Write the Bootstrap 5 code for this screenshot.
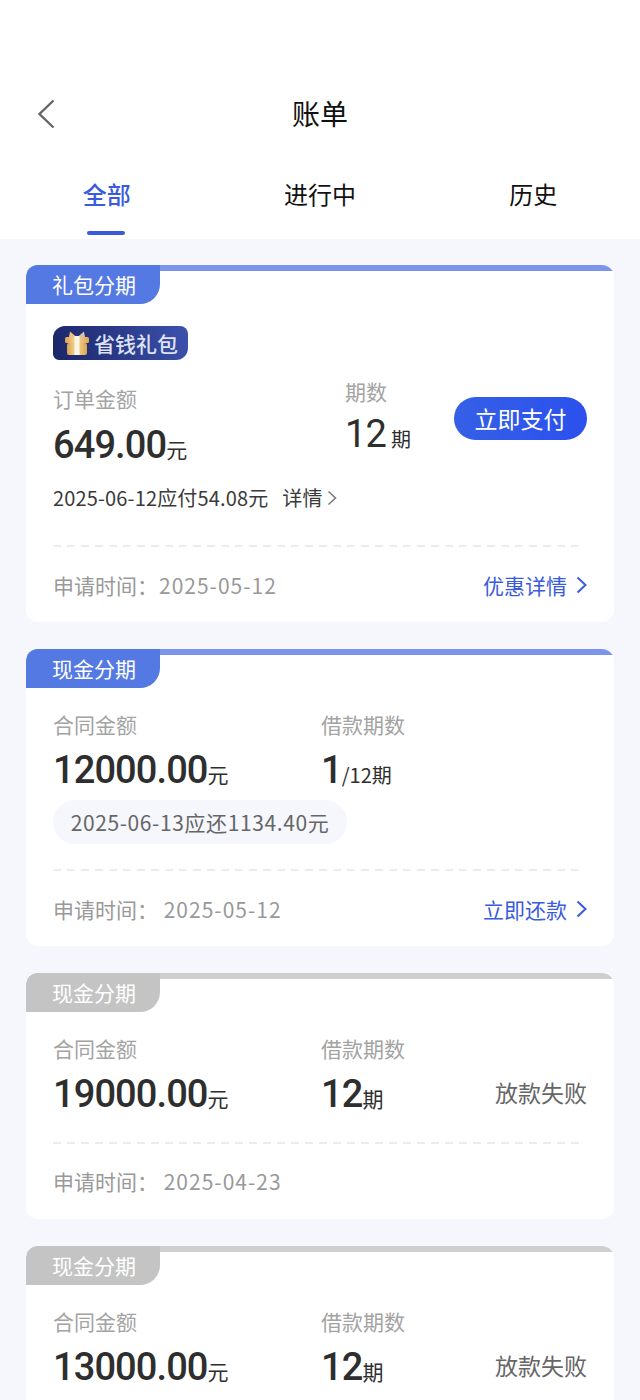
<!DOCTYPE html>
<html lang="zh-CN">
<head>
  <meta charset="UTF-8" />
  <meta name="viewport" content="width=device-width, initial-scale=1" />
  <title>账单</title>
  <link rel="stylesheet" href="https://cdn.jsdelivr.net/npm/bootstrap@5.3.0/dist/css/bootstrap.min.css" />
  <style>
    html, body {
      height: 1400px;
      overflow: hidden;
    }
    body {
      background: #f5f7fc;
      font-family: "Noto Sans CJK SC", "Noto Sans", sans-serif;
      color: #333;
    }
    .top-area {
      background: #fff;
      height: 239px;
      padding-top: 89px;
    }
    .title-bar {
      height: 48px;
      position: relative;
      font-size: 28px;
      line-height: 48px;
      color: #111;
      text-align: center;
    }
    .back-btn {
      position: absolute;
      left: 37px;
      top: 10px;
    }
    .tab-bar {
      height: 61px;
      margin-top: 33px;
    }
    .tab-item {
      flex: 1 1 0;
      text-align: center;
      font-size: 24px;
      line-height: 48px;
      color: #111;
      position: relative;
    }
    .tab-item.on {
      color: #3a5bdb;
      font-weight: 500;
    }
    .tab-item.on::after {
      content: "";
      position: absolute;
      left: 50%;
      bottom: -4px;
      width: 38px;
      height: 4px;
      margin-left: -20px;
      border-radius: 2px;
      background: #3a5bdb;
    }
    .bill-list {
      padding: 26px 26px 0;
      gap: 27px;
    }
    .bill-card {
      border: 0;
      border-radius: 12px;
      overflow: hidden;
      background: #fff;
      flex-shrink: 0;
    }
    .top-line {
      height: 6px;
      background: #7d94ec;
      border-radius: 6px 6px 0 0;
    }
    .bill-tag {
      width: 134px;
      height: 39px;
      margin-top: -6px;
      background: #5479e2;
      border-radius: 10px 0 20px 0;
      color: #fff;
      font-size: 21px;
      line-height: 38px;
      padding-left: 2px;
      text-align: center;
    }
    .is-off .top-line { background: #cfcfcf; }
    .is-off .bill-tag { background: #c4c4c4; }
    .bill-body {
      padding: 0 27px;
    }
    .gift-badge {
      width: 135px;
      height: 34px;
      margin-top: 22px;
      border-radius: 12px 8px 12px 6px;
      background: linear-gradient(75deg, #1b2568, #3c52ad);
      color: #dfe3f5;
      font-size: 21px;
      font-weight: 500;
      line-height: 34px;
      padding-left: 11px;
      gap: 4px;
    }
    .info-label {
      font-size: 21px;
      line-height: 30px;
      color: #a3a3a3;
      margin-bottom: 9px;
    }
    .left-col.wide .info-label {
      margin-bottom: 10px;
    }
    .period-col .info-label {
      margin-bottom: 6px;
    }
    .big-num {
      font-family: "Roboto", sans-serif;
      font-size: 38px;
      font-weight: 500;
      line-height: 44px;
      letter-spacing: -0.9px;
      color: #2e2e2e;
    }
    .period-col .big-num {
      font-weight: 400;
    }
    .unit-text {
      font-family: "Noto Sans CJK SC", sans-serif;
      font-size: 21px;
      font-weight: 400;
      letter-spacing: 0;
    }
    .unit-text.small-unit {
      font-size: 20px;
      margin-left: 5px;
    }
    .unit-text.slash-unit {
      font-size: 20px;
    }
    .left-col { width: 268px; }
    .left-col.wide { width: 292px; padding-top: 7px; }
    .pay-btn {
      width: 133px;
      height: 43px;
      margin-left: auto;
      margin-top: 21px;
      border: 0;
      border-radius: 22px;
      background: linear-gradient(90deg, #3560e6, #2b50ee);
      color: #fff;
      font-size: 23px;
      line-height: 41px;
      padding: 0;
    }
    .due-line {
      font-size: 20px;
      line-height: 28px;
      letter-spacing: 0.15px;
      color: #3a3a3a;
      margin-top: 13px;
      gap: 14px;
    }
    .due-pill {
      width: 294px;
      height: 44px;
      border-radius: 22px;
      background: #f5f7fc;
      color: #666;
      font-size: 21px;
      letter-spacing: 0.6px;
      line-height: 44px;
      text-align: center;
      margin-top: 3px;
    }
    .dash-line {
      height: 2px;
      margin-right: 7px;
      background: repeating-linear-gradient(90deg, #ececec 0 8px, transparent 8px 14px);
    }
    .foot-row {
      font-size: 21px;
      line-height: 30px;
      color: #999;
    }
    .date-num {
      letter-spacing: 1px;
      margin-left: 1px;
    }
    .foot-link {
      color: #3a5bdb;
      gap: 9px;
    }
    .status-text {
      margin-left: auto;
      margin-top: 37px;
      font-size: 23px;
      line-height: 44px;
      color: #666;
    }
    .last-body {
      padding-bottom: 48px;
    }
  </style>
</head>
<body>

<div class="top-area">
  <div class="title-bar">
    <svg class="back-btn" width="18" height="30" viewBox="0 0 18 30" fill="none">
      <path d="M16.5 1.5 L2.5 15 L16.5 28.5" stroke="#666" stroke-width="2.4" />
    </svg>
    账单
  </div>
  <div class="tab-bar d-flex">
    <div class="tab-item on">全部</div>
    <div class="tab-item">进行中</div>
    <div class="tab-item">历史</div>
  </div>
</div>

<div class="bill-list d-flex flex-column">

  <div class="card bill-card">
    <div class="top-line"></div>
    <div class="bill-tag">礼包分期</div>
    <div class="bill-body">
      <div class="gift-badge d-flex align-items-center">
        <svg width="26" height="26" viewBox="0 0 26 26">
          <defs>
            <linearGradient id="giftGold" x1="0" y1="0" x2="1" y2="0">
              <stop offset="0" stop-color="#d9a04e" />
              <stop offset="0.45" stop-color="#f6d99c" />
              <stop offset="1" stop-color="#dca653" />
            </linearGradient>
          </defs>
          <path d="M6 1.5 L12.5 7 L9 8 L5 7 Z" fill="#eec27a" />
          <path d="M20 1.5 L13.5 7 L17 8 L21 7 Z" fill="#cfc6b4" />
          <rect x="1" y="7" width="24" height="6" rx="1.5" fill="url(#giftGold)" />
          <rect x="3" y="13" width="20" height="12" rx="2" fill="url(#giftGold)" />
          <rect x="10.5" y="6" width="5" height="19" fill="#fdf5e4" />
        </svg>
        <span>省钱礼包</span>
      </div>
      <div class="d-flex" style="margin-top:16px">
        <div class="left-col wide">
          <div class="info-label">订单金额</div>
          <div class="big-num">649.00<span class="unit-text">元</span></div>
        </div>
        <div class="period-col">
          <div class="info-label">期数</div>
          <div class="big-num">12<span class="unit-text small-unit">期</span></div>
        </div>
        <button type="button" class="btn pay-btn">立即支付</button>
      </div>
      <div class="due-line d-flex align-items-center">
        <span>2025-06-12应付54.08元</span>
        <span class="d-flex align-items-center gap-1">详情
          <svg width="10" height="16" viewBox="0 0 10 16" fill="none"><path d="M1.5 1.5 L8.5 8 L1.5 14.5" stroke="#777" stroke-width="1.5" /></svg>
        </span>
      </div>
      <div class="dash-line" style="margin-top:33px"></div>
      <div class="foot-row d-flex justify-content-between align-items-center" style="margin-top:23px;margin-bottom:22px">
        <span>申请时间：<span class="date-num">2025-05-12</span></span>
        <span class="foot-link d-flex align-items-center">优惠详情
          <svg width="11" height="18" viewBox="0 0 11 18" fill="none"><path d="M1.5 1.5 L9.5 9 L1.5 16.5" stroke="#3a5bdb" stroke-width="2" /></svg>
        </span>
      </div>
    </div>
  </div>

  <div class="card bill-card">
    <div class="top-line"></div>
    <div class="bill-tag">现金分期</div>
    <div class="bill-body">
      <div class="d-flex" style="margin-top:21px">
        <div class="left-col">
          <div class="info-label">合同金额</div>
          <div class="big-num">12000.00<span class="unit-text">元</span></div>
        </div>
        <div>
          <div class="info-label">借款期数</div>
          <div class="big-num">1<span class="unit-text slash-unit">/12期</span></div>
        </div>
      </div>
      <div class="due-pill">2025-06-13应还1134.40元</div>
      <div class="dash-line" style="margin-top:25px"></div>
      <div class="foot-row d-flex justify-content-between align-items-center" style="margin-top:23px;margin-bottom:22px">
        <span>申请时间：&nbsp;<span class="date-num">2025-05-12</span></span>
        <span class="foot-link d-flex align-items-center">立即还款
          <svg width="11" height="18" viewBox="0 0 11 18" fill="none"><path d="M1.5 1.5 L9.5 9 L1.5 16.5" stroke="#3a5bdb" stroke-width="2" /></svg>
        </span>
      </div>
    </div>
  </div>

  <div class="card bill-card is-off">
    <div class="top-line"></div>
    <div class="bill-tag">现金分期</div>
    <div class="bill-body">
      <div class="d-flex" style="margin-top:21px">
        <div class="left-col">
          <div class="info-label">合同金额</div>
          <div class="big-num">19000.00<span class="unit-text">元</span></div>
        </div>
        <div>
          <div class="info-label">借款期数</div>
          <div class="big-num">12<span class="unit-text">期</span></div>
        </div>
        <div class="status-text">放款失败</div>
      </div>
      <div class="dash-line" style="margin-top:22px"></div>
      <div class="foot-row d-flex align-items-center" style="margin-top:22px;margin-bottom:23px">
        <span>申请时间：&nbsp;<span class="date-num">2025-04-23</span></span>
      </div>
    </div>
  </div>

  <div class="card bill-card is-off">
    <div class="top-line"></div>
    <div class="bill-tag">现金分期</div>
    <div class="bill-body last-body">
      <div class="d-flex" style="margin-top:21px">
        <div class="left-col">
          <div class="info-label">合同金额</div>
          <div class="big-num">13000.00<span class="unit-text">元</span></div>
        </div>
        <div>
          <div class="info-label">借款期数</div>
          <div class="big-num">12<span class="unit-text">期</span></div>
        </div>
        <div class="status-text">放款失败</div>
      </div>
    </div>
  </div>

</div>

<script src="https://cdn.jsdelivr.net/npm/bootstrap@5.3.0/dist/js/bootstrap.bundle.min.js"></script>
</body>
</html>
